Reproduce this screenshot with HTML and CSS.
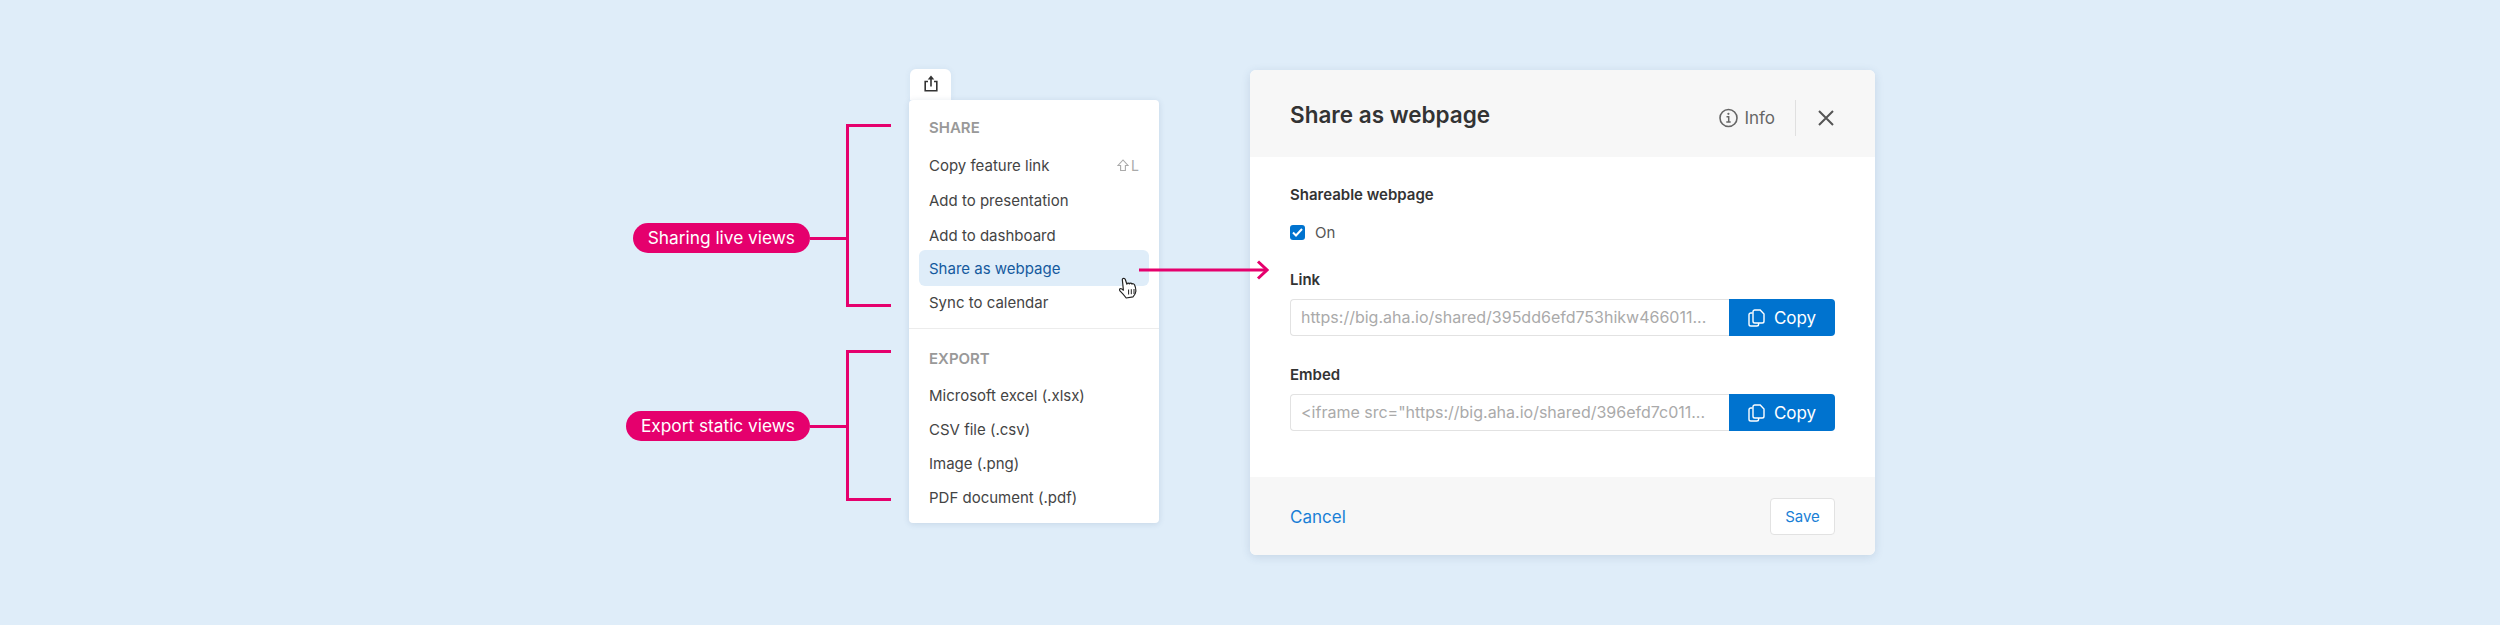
FILE: index.html
```html
<!DOCTYPE html>
<html lang="en">
<head>
<meta charset="utf-8">
<title>Share as webpage</title>
<link rel="stylesheet" href="styles.css">
</head>
<body>
<main class="stage">
  <section class="notes">
    <div class="note note-live">
      <div class="pill-wrap"><span class="pill">Sharing live views</span><span class="connector"></span></div>
      <div class="bracket"></div>
    </div>
    <div class="note note-export">
      <div class="pill-wrap"><span class="pill">Export static views</span><span class="connector"></span></div>
      <div class="bracket"></div>
    </div>
  </section>

  <section class="menu-col">
    <div class="tab">
      <svg width="16" height="17" viewBox="0 0 16 17" fill="none" stroke="#333" stroke-width="1.6"><path d="M5 6.500H2.200v9.200h11.600V6.500H11"/><path d="M8 11.500V2"/><path d="M8 .6l3.300 3.800H4.700z" fill="#333" stroke="none"/></svg>
    </div>
    <div class="menu">
      <div class="menu-section share">
        <div class="menu-head">SHARE</div>
        <div class="item"><span>Copy feature link</span><span class="shortcut"><svg width="12" height="13" viewBox="0 0 12 13" fill="none" stroke="#aaa" stroke-width="1.100"><path d="M6 1L1 6.500h2.600v5h4.800v-5H11z"/></svg>L</span></div>
        <div class="item">Add to presentation</div>
        <div class="item">Add to dashboard</div>
        <div class="item active">Share as webpage</div>
        <div class="item last">Sync to calendar</div>
      </div>
      <div class="menu-section export">
        <div class="menu-head">EXPORT</div>
        <div class="item">Microsoft excel (.xlsx)</div>
        <div class="item">CSV file (.csv)</div>
        <div class="item">Image (.png)</div>
        <div class="item">PDF document (.pdf)</div>
      </div>
      <svg class="cursor" width="20" height="22" viewBox="0 0 20 22" fill="#fff" stroke="#222" stroke-width="1.200" stroke-linejoin="round"><path d="M4 1.600c.9-.6 1.900-.1 2.300.9l1.600 4.700c.2-1.300 2-1.400 2.500-.3.3-1 2-1 2.500.2.500-.7 2-.5 2.600.7.9 1.900 1.500 4.600 1.300 6.700-.2 2.300-1.400 3.900-2.800 5.300l-6.800 1.200c-1.500-2-3.500-4.300-5.500-6.300-1-1-1.500-2.100-.9-2.800.7-.7 2-.2 3.600 1.300L3.400 3.300c-.2-.7 0-1.300.6-1.700z"/><path d="M9.600 12.500v5M12.300 12.200v5M15 12v5" fill="none" stroke-width="1"/></svg>
    </div>
  </section>

  <svg class="arrow" width="130" height="20" viewBox="0 0 130 20" fill="none" stroke="#e5006d" stroke-width="3"><path d="M0 10H128"/><path d="M119 1.500L128 10l-9 8.500"/></svg>

  <section class="modal">
    <header class="modal-head">
      <h1>Share as webpage</h1>
      <div class="head-tools">
        <span class="info">
          <svg width="19" height="20" viewBox="0 0 19 20" fill="none" stroke="#666" stroke-width="1.600"><circle cx="9.500" cy="10" r="8.500"/><path d="M7.500 8.800h2.200v5M7.300 14h4.400" stroke-width="1.500"/><circle cx="9.400" cy="5.800" r="1.100" fill="#666" stroke="none"/></svg>
          Info
        </span>
        <span class="sep"></span>
        <svg class="close" width="16" height="16" viewBox="0 0 16 16" fill="none" stroke="#555" stroke-width="2"><path d="M1 1l14 14M15 1L1 15"/></svg>
      </div>
    </header>
    <div class="modal-body">
      <div class="label">Shareable webpage</div>
      <div class="check-row">
        <span class="checkbox"><svg width="11" height="9" viewBox="0 0 11 9" fill="none" stroke="#fff" stroke-width="2"><path d="M1 4.500l3 3 6-6.500"/></svg></span>
        On
      </div>
      <div class="label field-label">Link</div>
      <div class="field">
        <div class="input">https://big.aha.io/shared/395dd6efd753hikw466011...</div>
        <div class="copy"><svg width="17" height="18" viewBox="0 0 17 18" fill="none" stroke="#fff" stroke-width="1.400"><path d="M4.500 4H2.800C1.800 4 1 4.800 1 5.800v9.400C1 16.200 1.800 17 2.800 17h6c1 0 1.800-.8 1.800-1.800V14"/><path d="M6.800 1h5.400L16 5v7.200c0 1-.8 1.800-1.800 1.800H6.800c-1 0-1.800-.8-1.800-1.800V2.800C5 1.800 5.800 1 6.800 1z"/></svg>Copy</div>
      </div>
      <div class="label field-label embed">Embed</div>
      <div class="field">
        <div class="input">&lt;iframe src="https://big.aha.io/shared/396efd7c011...</div>
        <div class="copy"><svg width="17" height="18" viewBox="0 0 17 18" fill="none" stroke="#fff" stroke-width="1.400"><path d="M4.500 4H2.800C1.800 4 1 4.800 1 5.800v9.400C1 16.200 1.800 17 2.800 17h6c1 0 1.800-.8 1.800-1.800V14"/><path d="M6.800 1h5.400L16 5v7.200c0 1-.8 1.800-1.800 1.800H6.800c-1 0-1.800-.8-1.800-1.800V2.800C5 1.800 5.800 1 6.800 1z"/></svg>Copy</div>
      </div>
    </div>
    <footer class="modal-foot">
      <span class="cancel">Cancel</span>
      <span class="save">Save</span>
    </footer>
  </section>
</main>
</body>
</html>
```
FILE: styles.css
```css
* { box-sizing: border-box; }
html, body { margin: 0; height: 100%; }
body {
  background: #dfedf9;
  font-family: Inter, "Liberation Sans", sans-serif;
  color: #444;
  overflow: hidden;
}
.stage {
  position: relative;
  display: flex;
  align-items: flex-start;
  height: 625px;
  padding-left: 624px;
}

/* annotations */
.notes {
  width: 286px;
  flex: none;
  padding-top: 124px;
}
.note { display: flex; justify-content: flex-end; }
.note-live { height: 183px; margin-bottom: 43px; }
.note-export { height: 151px; }
.note-live .pill-wrap { margin-top: 99px; }
.note-export .pill-wrap { margin-top: 61px; }
.pill-wrap { display: flex; align-items: center; height: 30px; }
.pill {
  display: block;
  height: 30px;
  line-height: 30px;
  padding: 0 15px;
  border-radius: 15px;
  background: #e5006d;
  color: #fff;
  font-size: 17.3px;
  white-space: nowrap;
}
.connector { width: 36px; height: 3px; background: #e5006d; }
.bracket {
  width: 45px;
  border: 3px solid #e5006d;
  border-right: 0;
}
.note-live .bracket, .note-export .bracket { margin-right: 19px; }

/* menu */
.menu-col { width: 250px; flex: none; padding-top: 69px; margin-left: -1px; }
.tab {
  width: 41px;
  height: 31px;
  margin-left: 1px;
  display: flex;
  align-items: center;
  justify-content: center;
  padding-bottom: 2px;
  background: #fff;
  border-radius: 6px 6px 0 0;
  box-shadow: 0 0 6px rgba(40, 70, 110, .07);
}
.menu {
  position: relative;
  height: 423px;
  background: #fff;
  border-radius: 4px;
  box-shadow: 0 1px 6px rgba(40, 70, 110, .14);
}
.menu-section { padding: 16px 10px 0; }
.share { height: 229px; border-bottom: 1px solid #ececec; }
.export { padding-top: 18px; }
.menu-head {
  height: 24px;
  line-height: 24px;
  padding-left: 10px;
  margin-bottom: 8px;
  font-size: 15px;
  font-weight: 600;
  color: #999;
}
.export .menu-head { margin-bottom: 7px; }
.item {
  display: flex;
  justify-content: space-between;
  align-items: center;
  height: 34px;
  padding: 0 10px;
  font-size: 15px;
  color: #444;
}
.share .item { margin-bottom: 1px; }
.share .active {
  height: 36px;
  margin: -3px 0 -1px;
  border-radius: 6px;
  background: #dfedf9;
  color: #155a9e;
}
.shortcut { display: flex; align-items: center; gap: 2px; font-size: 14px; color: #aaa; }
.cursor { position: absolute; left: 210px; top: 177px; }

.arrow { position: absolute; left: 1139px; top: 260px; }

/* modal */
.modal {
  width: 625px;
  height: 485px;
  margin: 70px 0 0 91px;
  flex: none;
  background: #fff;
  border-radius: 6px;
  overflow: hidden;
  box-shadow: 0 2px 10px rgba(40, 70, 110, .14);
}
.modal-head {
  display: flex;
  justify-content: space-between;
  align-items: flex-start;
  height: 87px;
  padding: 0 40px;
  background: #f7f7f7;
}
h1 {
  margin: 30px 0 0;
  line-height: 30px;
  font-size: 22.5px;
  font-weight: 600;
  color: #333;
}
.head-tools { display: flex; align-items: center; margin-top: 30px; height: 36px; }
.info { display: flex; align-items: center; gap: 6px; font-size: 17px; color: #666; }
.sep { width: 1px; height: 36px; margin: 0 22px 0 20px; background: #e0e0e0; }
.close { flex: none; margin-right: 1px; }
.modal-body { height: 320px; padding: 28px 40px 0; }
.label { height: 20px; line-height: 20px; font-size: 15px; font-weight: 600; color: #333; }
.check-row {
  display: flex;
  align-items: center;
  height: 16px;
  margin-top: 19px;
  gap: 10px;
  font-size: 15px;
  color: #555;
}
.checkbox {
  display: flex;
  align-items: center;
  justify-content: center;
  width: 15px;
  height: 15px;
  border-radius: 3px;
  background: #0073cf;
}
.field-label { margin-top: 30px; margin-bottom: 9px; }
.embed { margin-top: 29px; }
.field { display: flex; height: 37px; }
.input {
  flex: 1;
  padding-left: 10px;
  line-height: 35px;
  font-size: 16px;
  color: #aaa;
  white-space: nowrap;
  overflow: hidden;
  background: #fff;
  border: 1px solid #e2e2e2;
  border-right: 0;
  border-radius: 4px 0 0 4px;
}
.copy {
  flex: none;
  width: 106px;
  display: flex;
  align-items: center;
  justify-content: center;
  gap: 9px;
  background: #0073cf;
  color: #fff;
  font-size: 17px;
  border-radius: 0 4px 4px 0;
}
.modal-foot {
  display: flex;
  justify-content: space-between;
  align-items: center;
  height: 78px;
  padding: 1px 40px 0;
  background: #f7f7f7;
}
.cancel { font-size: 17px; color: #1a7fd6; }
.save {
  width: 65px;
  height: 37px;
  line-height: 35px;
  text-align: center;
  font-size: 15px;
  color: #1a7fd6;
  background: #fff;
  border: 1px solid #e2e2e2;
  border-radius: 4px;
}
```
